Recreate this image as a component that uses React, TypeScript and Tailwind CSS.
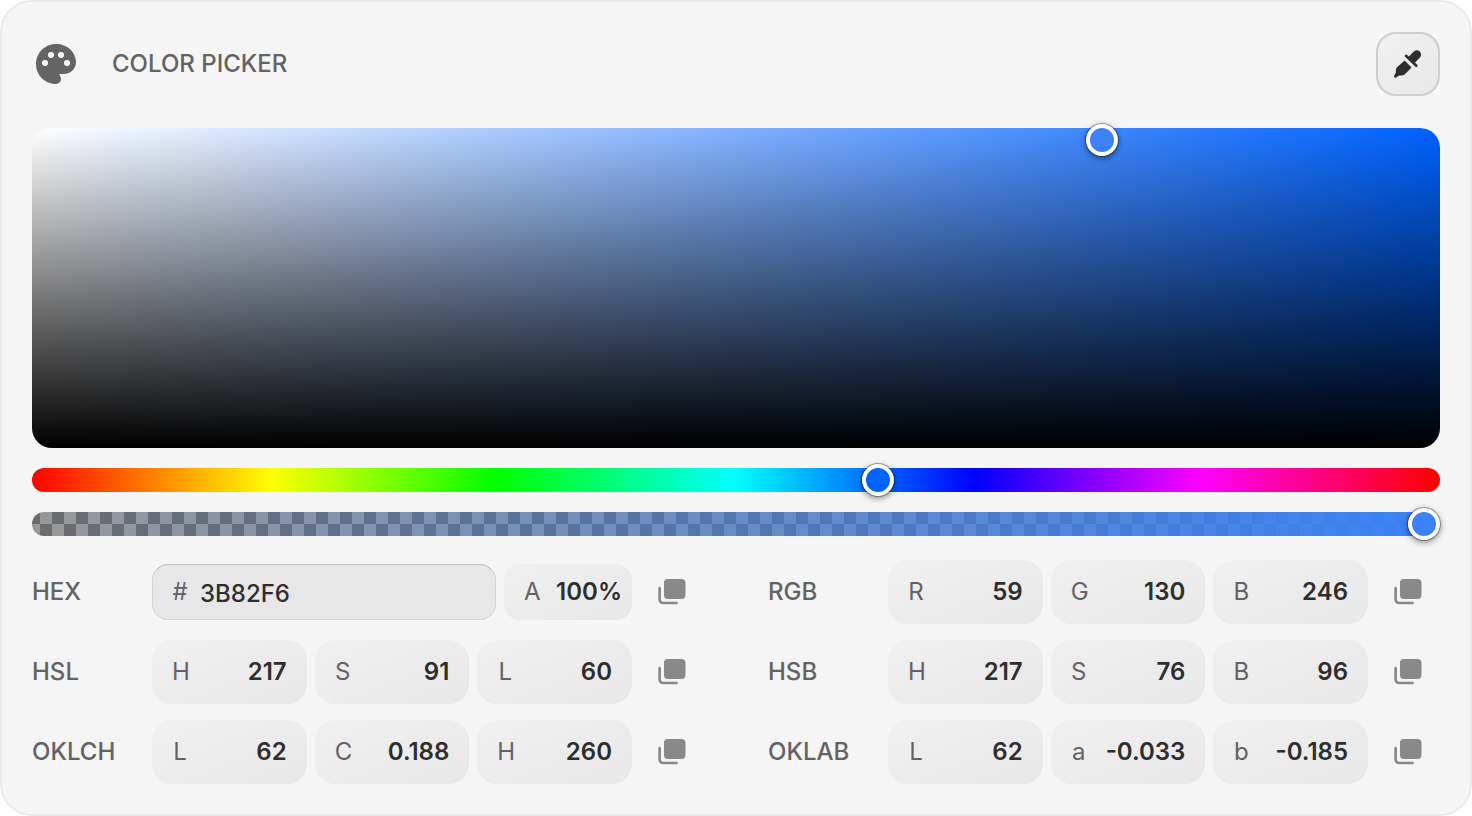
import React, { useState } from "react";

interface Channel {
  name: string;
  value: string;
}

interface ColorFormat {
  label: string;
  channels: Channel[];
}

const HSL: ColorFormat = {
  label: "HSL",
  channels: [
    { name: "H", value: "217" },
    { name: "S", value: "91" },
    { name: "L", value: "60" },
  ],
};

const OKLCH: ColorFormat = {
  label: "OKLCH",
  channels: [
    { name: "L", value: "62" },
    { name: "C", value: "0.188" },
    { name: "H", value: "260" },
  ],
};

const RGB: ColorFormat = {
  label: "RGB",
  channels: [
    { name: "R", value: "59" },
    { name: "G", value: "130" },
    { name: "B", value: "246" },
  ],
};

const HSB: ColorFormat = {
  label: "HSB",
  channels: [
    { name: "H", value: "217" },
    { name: "S", value: "76" },
    { name: "B", value: "96" },
  ],
};

const OKLAB: ColorFormat = {
  label: "OKLAB",
  channels: [
    { name: "L", value: "62" },
    { name: "a", value: "-0.033" },
    { name: "b", value: "-0.185" },
  ],
};

const PaletteIcon = () => (
  <svg viewBox="0 0 24 24" className="size-12 shrink-0" aria-hidden="true">
    <path
      fill="#646464"
      d="M12 2C6.49 2 2 6.49 2 12s4.49 10 10 10a2.5 2.5 0 0 0 2.5-2.5c0-.61-.23-1.2-.64-1.67a.53.53 0 0 1-.13-.33c0-.28.22-.5.5-.5H16c3.31 0 6-2.69 6-6 0-4.96-4.49-9-10-9z"
    />
    <g fill="#f8f8f8">
      <circle cx="6.5" cy="11.5" r="1.5" />
      <circle cx="9.5" cy="7.5" r="1.5" />
      <circle cx="14.5" cy="7.5" r="1.5" />
      <circle cx="17.5" cy="11.5" r="1.5" />
    </g>
  </svg>
);

const EyedropperIcon = () => (
  <svg viewBox="0 0 28 28" className="size-7" fill="#2e2e2e" aria-hidden="true">
    <path d="M14 7.6l5.3-5.7c2-2.1 4.7-2.3 6.5-.5s1.7 4.5-.3 6.5l-5.4 5.7z" />
    <path d="M12 5.8l10.3 10" fill="none" stroke="#2e2e2e" strokeWidth="2.6" strokeLinecap="round" />
    <path d="M10.6 10.4l7 7-6.7 6.8a4.8 4.8 0 0 1-3.4 1.4H5.2l-3.1 2a1.4 1.4 0 0 1-1.9-1.9l1.7-3.1v-2.1c0-1.3.5-2.5 1.4-3.4z" />
  </svg>
);

const CopyIcon = () => (
  <svg viewBox="0 0 28 26" className="h-[26px] w-7" aria-hidden="true">
    <rect x="6" width="21.5" height="20" rx="4" fill="#898989" />
    <path
      d="M1.6 9v11.4a3.6 3.6 0 0 0 3.6 3.6H18.6"
      fill="none"
      stroke="#898989"
      strokeWidth="2.7"
      strokeLinecap="round"
    />
  </svg>
);

const CopyButton: React.FC<{ label: string }> = ({ label }) => (
  <button aria-label={`Copy ${label}`} className="ml-2 flex size-16 shrink-0 items-center justify-center rounded-[20px]">
    <CopyIcon />
  </button>
);

const ChannelField: React.FC<{ channel: Channel; format: string }> = ({ channel, format }) => {
  const [value, setValue] = useState(channel.value);
  return (
    <label className="flex h-16 min-w-0 items-center rounded-[20px] bg-linear-to-br from-[#f0f0f0] to-[#e8e8e8] px-5">
      <span className="w-4 text-center font-normal">{channel.name}</span>
      <input
        aria-label={`${format} ${channel.name}`}
        value={value}
        onChange={(e) => setValue(e.target.value)}
        className="min-w-0 flex-1 bg-transparent text-right font-semibold text-[#2e2e2e] outline-none"
      />
    </label>
  );
};

const FormatRow: React.FC<{ format: ColorFormat }> = ({ format }) => (
  <div className="flex min-w-0 items-center">
    <span className="w-[120px] shrink-0">{format.label}</span>
    <div className="grid min-w-0 flex-1 grid-cols-3 gap-2">
      {format.channels.map((channel) => (
        <ChannelField key={channel.name} channel={channel} format={format.label} />
      ))}
    </div>
    <CopyButton label={format.label} />
  </div>
);

const HexRow = () => {
  const [hex, setHex] = useState("3B82F6");
  const [alpha, setAlpha] = useState("100%");
  return (
    <div className="flex min-w-0 items-center">
      <span className="w-[120px] shrink-0">HEX</span>
      <div className="flex min-w-0 flex-1 gap-2">
        <label className="flex h-14 min-w-0 flex-1 items-center gap-3 rounded-2xl border border-[#d4d4d4] border-t-[#bdbdbd] bg-[#e7e7e7] px-[19px]">
          <span className="w-4 text-center font-normal">#</span>
          <input
            aria-label="Hex"
            value={hex}
            onChange={(e) => setHex(e.target.value)}
            className="min-w-0 flex-1 bg-transparent pt-1 font-medium text-[#2e2e2e] outline-none"
          />
        </label>
        <label className="flex h-14 w-32 shrink-0 items-center rounded-2xl bg-linear-to-br from-[#f0f0f0] to-[#e8e8e8] pr-2.5 pl-5">
          <span className="w-4 text-center font-normal">A</span>
          <input
            aria-label="Alpha percent"
            value={alpha}
            onChange={(e) => setAlpha(e.target.value)}
            className="min-w-0 flex-1 bg-transparent text-right font-semibold text-[#2e2e2e] outline-none"
          />
        </label>
      </div>
      <CopyButton label="HEX" />
    </div>
  );
};

const SLIDER =
  "h-8 w-full cursor-pointer appearance-none bg-transparent outline-none [&::-webkit-slider-thumb]:size-8 [&::-webkit-slider-thumb]:appearance-none [&::-webkit-slider-thumb]:rounded-full [&::-webkit-slider-thumb]:border-4 [&::-webkit-slider-thumb]:border-white [&::-webkit-slider-thumb]:shadow-[0_0_0_1px_rgba(0,0,0,0.3),0_2px_6px_rgba(0,0,0,0.5)]";

const App = () => {
  const [hue, setHue] = useState(217.2);
  const [alpha, setAlpha] = useState(100);
  const saturation = 76;
  const brightness = 96.3;

  return (
    <main className="rounded-[32px] border-2 border-[#ebebeb] bg-[#f5f5f5] p-[30px] font-['Inter',sans-serif] text-2xl font-medium text-[#636363]">
      <header className="flex h-16 items-center gap-8">
        <PaletteIcon />
        <h1 className="font-medium">COLOR PICKER</h1>
        <button
          aria-label="Pick a color from the screen"
          className="ml-auto flex size-16 items-center justify-center rounded-[20px] border-2 border-[#cecece] bg-linear-to-br from-[#f1f1f1] to-[#e8e8e8]"
        >
          <EyedropperIcon />
        </button>
      </header>

      <div className="relative mt-8 h-80 rounded-[20px] bg-[linear-gradient(to_top,#000,transparent),linear-gradient(to_right,#fff,#0062ff)]">
        <button
          aria-label="Saturation and brightness"
          className="absolute size-8 -translate-x-1/2 -translate-y-1/2 rounded-full border-4 border-white bg-[#3b82f6] shadow-[0_0_0_1px_rgba(0,0,0,0.3),0_2px_6px_rgba(0,0,0,0.5)]"
          style={{ left: `${saturation}%`, top: `${100 - brightness}%` }}
        />
      </div>

      <div className="mt-5 flex h-6 items-center rounded-full bg-[linear-gradient(to_right,#f00_0%,#ff0_17%,#0f0_33%,#0ff_50%,#00f_67%,#f0f_83%,#f00_100%)]">
        <input
          type="range"
          aria-label="Hue"
          min={0}
          max={360}
          step={0.1}
          value={hue}
          onChange={(e) => setHue(Number(e.target.value))}
          className={`${SLIDER} [&::-webkit-slider-thumb]:bg-[#0062ff]`}
        />
      </div>

      <div className="mt-5 h-6 rounded-full bg-[repeating-conic-gradient(#989898_0_25%,#6b6b6b_0_50%)] bg-size-[24px_24px] bg-position-[-4px_0]">
        <div className="flex h-6 items-center rounded-full bg-linear-to-r from-[#3b82f6]/0 to-[#3b82f6]">
          <input
            type="range"
            aria-label="Alpha"
            min={0}
            max={100}
            value={alpha}
            onChange={(e) => setAlpha(Number(e.target.value))}
            className={`${SLIDER} [&::-webkit-slider-thumb]:bg-[#3b82f6]`}
          />
        </div>
      </div>

      <section className="mt-6 grid grid-cols-2 gap-x-16 gap-y-4">
        <HexRow />
        <FormatRow format={RGB} />
        <FormatRow format={HSL} />
        <FormatRow format={HSB} />
        <FormatRow format={OKLCH} />
        <FormatRow format={OKLAB} />
      </section>
    </main>
  );
};

export default App;
